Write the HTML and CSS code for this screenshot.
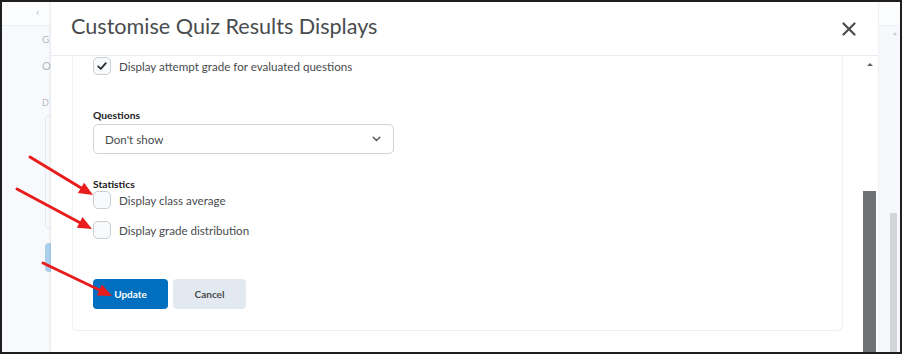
FILE: index.html
```html
<!DOCTYPE html>
<html lang="en">
<head>
<meta charset="UTF-8" />
<title>Customise Quiz Results Displays</title>
<link rel="stylesheet" href="styles.css">
</head>
<body>

<div class="shot">
  <div class="frame">

    <!-- Page behind the dialog (left) -->
    <div class="page-left">
      <div class="page-top"><span class="back">&#8249;</span></div>
      <span class="ghost g1">G</span>
      <span class="ghost g2">O</span>
      <span class="ghost g3">D</span>
      <div class="ghost-box"></div>
      <div class="ghost-btn"></div>
    </div>

    <!-- Dialog -->
    <div class="modal">
      <div class="modal-header">
        <h1>Customise Quiz Results Displays</h1>
        <svg class="close" width="14" height="14" viewBox="0 0 14 14">
          <path d="M1.5 1.5 L12.5 12.5 M12.5 1.5 L1.5 12.5" stroke="#494c4e" stroke-width="2.2" stroke-linecap="round" />
        </svg>
      </div>

      <div class="modal-body">
        <div class="scroll-content">
          <div class="card">
            <label class="check-row first">
              <span class="checkbox">
                <svg width="12" height="12" viewBox="0 0 12 12">
                  <path d="M2.2 6.4 L4.8 8.8 L9.8 3.2" fill="none" stroke="#2b2d2f" stroke-width="1.8" stroke-linecap="round" stroke-linejoin="round" />
                </svg>
              </span>
              Display attempt grade for evaluated questions
            </label>

            <div class="field-label questions-label">Questions</div>
            <div class="select">
              <span>Don't show</span>
              <svg width="9" height="6" viewBox="0 0 9 6">
                <path d="M1.2 1.3 L4.5 4.5 L7.8 1.3" fill="none" stroke="#565a5c" stroke-width="1.5" stroke-linecap="round" stroke-linejoin="round" />
              </svg>
            </div>

            <div class="field-label stats-label">Statistics</div>
            <label class="check-row">
              <span class="checkbox"></span>
              Display class average
            </label>
            <label class="check-row second">
              <span class="checkbox"></span>
              Display grade distribution
            </label>

            <div class="actions">
              <button class="btn primary">Update</button>
              <button class="btn">Cancel</button>
            </div>
          </div>
        </div>

        <div class="modal-scroll">
          <span class="scroll-up"></span>
          <div class="scroll-thumb"></div>
        </div>
      </div>
    </div>

    <!-- Page behind the dialog (right) -->
    <div class="page-right">
      <div class="page-top"></div>
      <span class="page-up"></span>
      <div class="page-thumb"></div>
    </div>
  </div>

  <!-- Annotation arrows -->
  <svg class="arrows" width="902" height="354" viewBox="0 0 902 354">
    <g stroke="#e81c1c" stroke-width="3" stroke-linecap="round" fill="#e81c1c">
      <line x1="30" y1="157" x2="82" y2="188.5" />
      <polygon stroke="none" points="93,195 77.9,192.9 84.1,182.7" />
      <line x1="17" y1="189" x2="80.5" y2="223" />
      <polygon stroke="none" points="92,229 76.8,227.7 82.5,217.1" />
      <line x1="43" y1="263" x2="100.5" y2="290.5" />
      <polygon stroke="none" points="112,296 96.8,295.4 102,284.6" />
    </g>
  </svg>
</div>

</body>
</html>
```

FILE: styles.css
```css
/* Reset and basics */
* {margin:0; padding:0; box-sizing:border-box;}
body {
  background: #fff;
  font-family: 'Lato', 'Liberation Sans', sans-serif;
  color: #494c4e;
}

.shot {
  position: relative;
  width: 902px;
  height: 354px;
}

.frame {
  width: 902px;
  height: 354px;
  border: 2px solid #1e1e1e;
  display: flex;
  overflow: hidden;
}

/* Page behind the dialog */
.page-left {
  width: 49px;
  background: #f8f9fc;
  position: relative;
  overflow: hidden;
}
.page-top {
  height: 24px;
  border-bottom: 1px solid #eceff3;
  background: #fbfcfd;
  position: relative;
}
.back {
  position: absolute;
  left: 34px;
  top: 3px;
  font-size: 12px;
  line-height: 14px;
  color: #b9bdc1;
}
.ghost {
  position: absolute;
  left: 40px;
  font-size: 10px;
  color: #b5b9bd;
}
.g1 { top: 31px; }
.g2 { top: 57px; font-size: 11px; }
.g3 { top: 95px; font-size: 9px; }
.ghost-box {
  position: absolute;
  left: 43px;
  top: 113px;
  width: 20px;
  height: 114px;
  border: 1px solid #e6e9ed;
  border-radius: 4px;
}
.ghost-btn {
  position: absolute;
  left: 43px;
  top: 241px;
  width: 20px;
  height: 29px;
  background: #acd0ec;
  border-radius: 4px;
}

.page-right {
  width: 22px;
  background: #f7f8fb;
  position: relative;
  border-left: 1px solid #eef0f3;
}
.page-up {
  position: absolute;
  left: 14px;
  top: 30px;
  border: 2px solid transparent;
  border-bottom: 3px solid #c9ccd0;
  border-top: none;
}
.page-thumb {
  position: absolute;
  left: 11px;
  top: 211px;
  width: 7px;
  bottom: 0;
  background: #d3d6d9;
}

/* Dialog */
.modal {
  width: 827px;
  background: #fff;
  display: flex;
  flex-direction: column;
  box-shadow: -1px 0 2px rgba(0,0,0,0.08);
  position: relative;
}
.modal-header {
  height: 54px;
  border-bottom: 1px solid #e8ecf2;
  display: flex;
  align-items: center;
  justify-content: space-between;
  padding: 0 22px 6px 20px;
}
.modal-header h1 {
  font-size: 21.6px;
  font-weight: 400;
  color: #494c4e;
}
.close {
  margin-top: 6px;
}

.modal-body {
  flex: 1;
  display: flex;
}
.scroll-content {
  flex: 1;
  padding-left: 21px;
  padding-right: 20px;
}
.card {
  border: 1px solid #eef0f4;
  border-top: none;
  border-radius: 0 0 6px 6px;
  height: 275px;
  padding: 1px 0 0 20px;
}

.check-row {
  display: flex;
  align-items: center;
  gap: 8px;
  font-size: 11.6px;
  height: 18px;
  color: #494c4e;
}
.check-row.second {
  margin-top: 12px;
}
.checkbox {
  width: 18px;
  height: 18px;
  border: 1px solid #c9ced4;
  border-radius: 5px;
  background: #f9fafb;
  display: flex;
  align-items: center;
  justify-content: center;
}

.field-label {
  font-size: 10.3px;
  font-weight: 700;
  color: #202122;
}
.questions-label {
  margin-top: 34px;
  height: 15px;
}
.stats-label {
  margin-top: 24px;
  height: 13px;
}

.select {
  width: 301px;
  height: 30px;
  border: 1px solid #cdd3d9;
  border-radius: 5px;
  display: flex;
  align-items: center;
  justify-content: space-between;
  padding: 0 12px 0 11px;
  font-size: 11.6px;
  color: #494c4e;
}

.actions {
  display: flex;
  gap: 5px;
  margin-top: 40px;
}
.btn {
  width: 73px;
  height: 30px;
  border: none;
  border-radius: 4px;
  background: #e3e9f1;
  font-family: 'Lato', 'Liberation Sans', sans-serif;
  font-size: 10px;
  font-weight: 700;
  color: #494c4e;
}
.btn.primary {
  width: 75px;
  background: #006fbf;
  color: #fff;
}

/* Dialog scrollbar */
.modal-scroll {
  width: 14px;
  margin-right: 1px;
  position: relative;
}
.scroll-up {
  position: absolute;
  left: 4px;
  top: 7px;
  border: 3px solid transparent;
  border-bottom: 3px solid #5f6366;
  border-top: none;
}
.scroll-thumb {
  position: absolute;
  left: 0;
  top: 135px;
  width: 13px;
  bottom: 0;
  background: #6e7275;
}

/* Annotation arrows */
.arrows {
  position: absolute;
  top: 0;
  left: 0;
  pointer-events: none;
}
```
